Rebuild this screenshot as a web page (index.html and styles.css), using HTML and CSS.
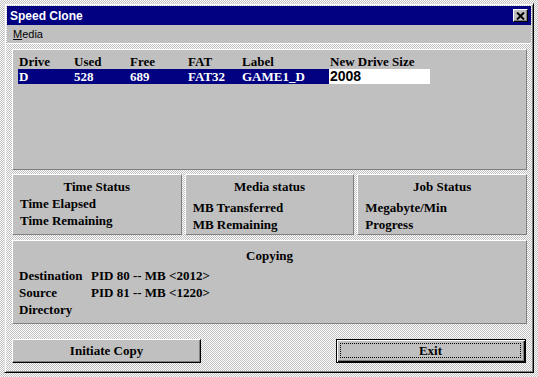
FILE: index.html
```html
<!DOCTYPE html>
<html>
<head>
<meta charset="utf-8">
<link rel="stylesheet" href="styles.css">
</head>
<body>
<div class="window">
  <div class="titlebar">
    <span class="title">Speed Clone</span>
    <span class="close"><svg width="9" height="8" viewBox="0 0 9 8"><path d="M1 0.5 L8 7.5 M8 0.5 L1 7.5" stroke="#000" stroke-width="2" fill="none"/></svg></span>
  </div>
  <div class="menubar"><span class="menu"><u>M</u>edia</span></div>
  <div class="client">
    <div class="panel drives">
      <div class="grid head">
        <span>Drive</span><span>Used</span><span>Free</span><span>FAT</span><span>Label</span><span>New Drive Size</span>
      </div>
      <div class="grid row">
        <span class="sel">D</span><span class="sel">528</span><span class="sel">689</span><span class="sel">FAT32</span><span class="sel">GAME1_D</span><span class="size">2008</span>
      </div>
    </div>
    <div class="status">
      <div class="panel stat">
        <div class="ptitle">Time Status</div>
        <div>Time Elapsed</div>
        <div>Time Remaining</div>
      </div>
      <div class="panel stat">
        <div class="ptitle">Media status</div>
        <div class="lower">MB Transferred</div>
        <div>MB Remaining</div>
      </div>
      <div class="panel stat">
        <div class="ptitle">Job Status</div>
        <div class="lower">Megabyte/Min</div>
        <div>Progress</div>
      </div>
    </div>
    <div class="panel copying">
      <div class="ptitle">Copying</div>
      <div class="kv"><span class="k">Destination</span><span>PID 80 -- MB &lt;2012&gt;</span></div>
      <div class="kv"><span class="k">Source</span><span>PID 81 -- MB &lt;1220&gt;</span></div>
      <div class="kv"><span class="k">Directory</span><span></span></div>
    </div>
    <div class="buttons">
      <div class="btn">Initiate Copy</div>
      <div class="btn default"><div class="focus">Exit</div></div>
    </div>
  </div>
</div>
</body>
</html>
```

FILE: styles.css
```css
* { box-sizing: border-box; }
html, body {
  margin: 0;
  width: 538px;
  height: 377px;
  overflow: hidden;
}
body {
  background: repeating-conic-gradient(#c0c0c0 0% 25%, #ffffff 0% 50%) 0 0 / 2px 2px;
  font-family: "Liberation Serif", "Times New Roman", serif;
  font-weight: bold;
  font-size: 13px;
  color: #000;
}
.window {
  margin: 3px 0 0 4px;
  width: 530px;
  height: 370px;
  border: 1px solid;
  border-color: #dfdfdf #000 #000 #dfdfdf;
  box-shadow: inset 1px 1px #fff, inset -1px -1px #808080;
  padding: 2px;
  display: flex;
  flex-direction: column;
  background: repeating-conic-gradient(#c0c0c0 0% 25%, #ffffff 0% 50%) 0 0 / 2px 2px;
}
.titlebar {
  height: 19px;
  background: #000080;
  display: flex;
  align-items: center;
  justify-content: space-between;
  padding: 0 3px 0 3px;
  flex: none;
}
.title {
  font-family: "Liberation Sans", Arial, sans-serif;
  font-size: 12px;
  font-weight: bold;
  color: #fff;
}
.close {
  width: 15px;
  height: 13px;
  background: #c0c0c0;
  border: 1px solid;
  border-color: #fff #000 #000 #fff;
  box-shadow: inset -1px -1px #808080;
  display: flex;
  align-items: center;
  justify-content: center;
}
.menubar {
  height: 19px;
  background: #c0c0c0;
  flex: none;
  display: flex;
  align-items: center;
  padding-left: 6px;
  border-bottom: 1px solid #fff;
}
.menu {
  font-family: "Liberation Sans", Arial, sans-serif;
  font-weight: normal;
  font-size: 11px;
}
.client {
  flex: 1;
  padding: 5px 4px 0 5px;
  display: flex;
  flex-direction: column;
}
.panel {
  background: #c0c0c0;
  border: 1px solid;
  border-color: #fff #808080 #808080 #fff;
}
.drives {
  height: 121px;
  padding: 4px 0 0 5px;
}
.grid {
  display: grid;
  grid-template-columns: 55px 56px 58px 54px 88px 101px;
  line-height: 15px;
  height: 15px;
}
.head span { padding-left: 1px; white-space: nowrap; }
.row span { white-space: nowrap; }
.sel {
  background: #000080;
  color: #fff;
  padding-left: 1px;
}
.size {
  background: #fff;
  font-family: "Liberation Sans", Arial, sans-serif;
  font-size: 14px;
  padding-left: 1px;
}
.status {
  margin-top: 4px;
  height: 61px;
  display: grid;
  grid-template-columns: 1fr 1fr 1fr;
  gap: 3px;
}
.stat {
  padding: 3px 7px 0 7px;
  line-height: 17px;
}
.ptitle { text-align: center; }
.lower { margin-top: 4px; }
.copying {
  margin-top: 5px;
  height: 84px;
  padding: 6px 6px 0 6px;
  line-height: 17px;
}
.copying .ptitle { margin-bottom: 3px; }
.kv { display: flex; }
.k { width: 72px; flex: none; }
.buttons {
  margin-top: 15px;
  display: flex;
  justify-content: space-between;
  padding-right: 1px;
}
.btn {
  width: 189px;
  height: 24px;
  background: #c0c0c0;
  border: 1px solid;
  border-color: #fff #000 #000 #fff;
  box-shadow: inset -1px -1px #808080;
  display: flex;
  align-items: center;
  justify-content: center;
}
.btn.default {
  width: 190px;
  border: 1px solid #000;
  box-shadow: inset 1px 1px #fff, inset -1px -1px #000, inset -2px -2px #808080;
  padding: 3px 4px 4px 3px;
}
.focus {
  width: 100%;
  height: 100%;
  border: 1px dotted #000;
  display: flex;
  align-items: center;
  justify-content: center;
}
```
